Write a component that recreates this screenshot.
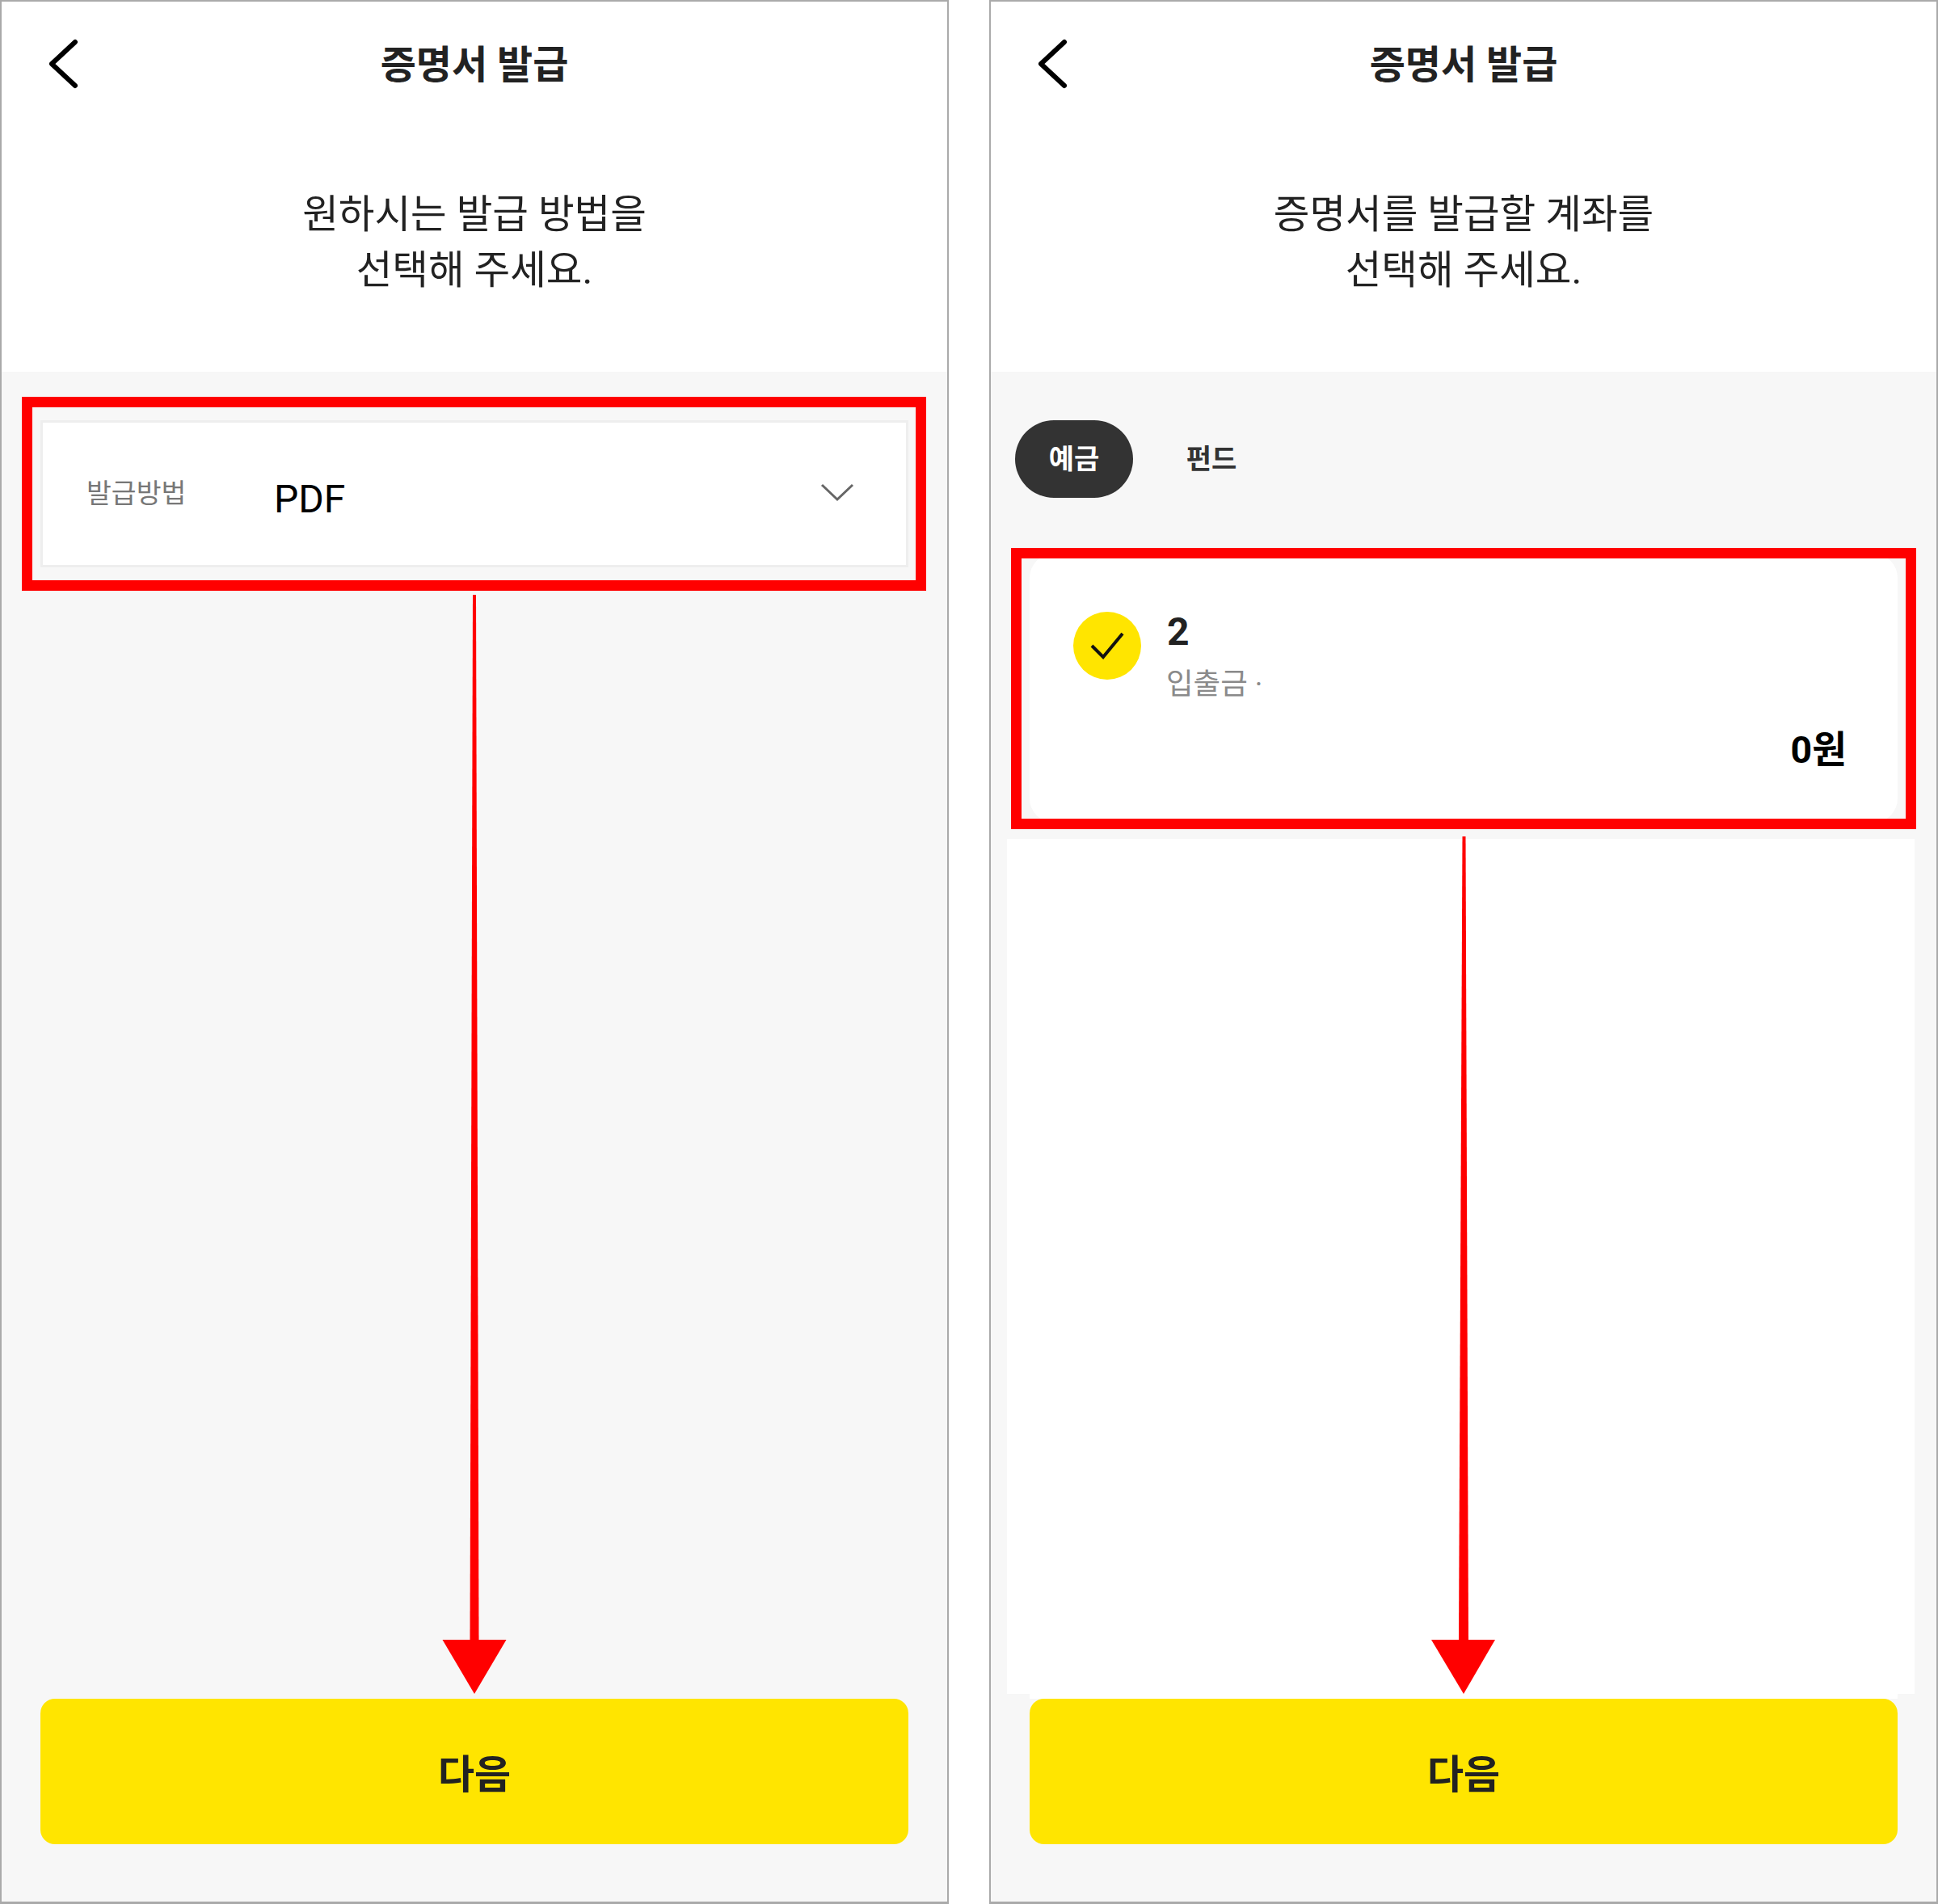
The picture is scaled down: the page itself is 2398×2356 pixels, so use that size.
<script>
  let tab = 0;
</script>

<main class="page">
  <section class="panel">
    <header class="head">
      <div class="topbar">
        <svg class="back" width="37" height="64" viewBox="0 0 37 64">
          <path d="M33 5 L4 32 L33 59" />
        </svg>
        <h1>증명서 발급</h1>
      </div>
      <p class="lead">원하시는 발급 방법을<br />선택해 주세요.</p>
    </header>
    <div class="body">
      <div class="select">
        <span class="select-label">발급방법</span>
        <span class="select-value">PDF</span>
        <svg class="chevron" width="42" height="24" viewBox="0 0 42 24">
          <path d="M2 3 L21 21 L40 3" />
        </svg>
      </div>
      <button class="next">다음</button>
    </div>
  </section>

  <section class="panel">
    <header class="head">
      <div class="topbar">
        <svg class="back" width="37" height="64" viewBox="0 0 37 64">
          <path d="M33 5 L4 32 L33 59" />
        </svg>
        <h1>증명서 발급</h1>
      </div>
      <p class="lead">증명서를 발급할 계좌를<br />선택해 주세요.</p>
    </header>
    <div class="body">
      <div class="tabs">
        <button class="tab" class:on={tab === 0} onclick={() => (tab = 0)}>예금</button>
        <button class="tab" class:on={tab === 1} onclick={() => (tab = 1)}>펀드</button>
      </div>
      <div class="account">
        <div class="account-top">
          <span class="tick">
            <svg width="44" height="36" viewBox="0 0 44 36">
              <path d="M3 18 L17 32 L41 3" />
            </svg>
          </span>
          <div class="account-info">
            <div class="account-no">2</div>
            <div class="account-type">입출금 ·</div>
          </div>
        </div>
        <div class="account-amount">0원</div>
      </div>
      <div class="blank"></div>
      <div class="strip"></div>
      <button class="next">다음</button>
    </div>
  </section>

  <!-- red annotations drawn over the screenshots -->
  <svg class="marks" width="2398" height="2356" viewBox="0 0 2398 2356">
    <rect x="33.5" y="497.5" width="1106" height="227" />
    <rect x="1257.5" y="684.5" width="1107" height="335" />
    <polygon points="585,736 589,736 592.5,2030 581.5,2030" />
    <polygon points="547.5,2029 626.5,2029 587,2096" />
    <polygon points="1809.5,1035 1813.5,1035 1817,2030 1805,2030" />
    <polygon points="1771,2029 1850,2029 1811,2096" />
  </svg>
</main>

<style>
  :global(body) {
    margin: 0;
    background: #fff;
  }

  * {
    box-sizing: border-box;
  }

  .page {
    position: relative;
    display: flex;
    gap: 50px;
    width: 2398px;
    height: 2356px;
    font-family: Roboto, "Noto Sans CJK KR", sans-serif;
    color: #222;
  }

  .panel {
    display: flex;
    flex-direction: column;
    width: 1174px;
    height: 2356px;
    border: 3px solid #aaa;
    border-width: 2px 2px 3px 2px;
  }

  .head {
    height: 458px;
    background: #fff;
    flex: none;
  }

  .topbar {
    display: grid;
    grid-template-columns: 1fr auto 1fr;
    align-items: center;
    height: 64px;
    margin-top: 45px;
    padding-left: 58px;
  }

  .back path {
    fill: none;
    stroke: #000;
    stroke-width: 6;
    stroke-linecap: round;
    stroke-linejoin: round;
  }

  h1 {
    margin: 0;
    font-size: 48px;
    font-weight: 700;
    line-height: 64px;
    letter-spacing: 0;
    transform: translate(-29px, 1.5px);
  }

  .lead {
    margin: 120px 0 0;
    text-align: center;
    font-size: 48.5px;
    font-weight: 400;
    line-height: 69px;
  }

  .body {
    flex: 1;
    display: flex;
    flex-direction: column;
    background: #f7f7f7;
    padding-top: 60px;
  }

  .select {
    display: flex;
    align-items: center;
    height: 182px;
    margin: 0 48px;
    padding: 0 64px 0 54px;
    background: #fff;
    border: 3px solid #eee;
  }

  .select-label {
    width: 232px;
    font-size: 33.5px;
    color: #777;
    margin-top: -8px;
  }

  .select-value {
    font-size: 48px;
    color: #000;
    margin-top: 12px;
  }

  .chevron {
    margin-left: auto;
    margin-top: -4px;
  }

  .chevron path {
    fill: none;
    stroke: #666;
    stroke-width: 3;
  }

  .next {
    display: block;
    height: 180px;
    margin: auto 48px 71px 48px;
    padding: 0 0 2px;
    border: 0;
    border-radius: 18px;
    background: #ffe500;
    font: 700 49px Roboto, "Noto Sans CJK KR", sans-serif;
    color: #222;
  }

  .tabs {
    display: flex;
    gap: 24px;
    margin-left: 30px;
  }

  .tab {
    width: 146px;
    height: 96px;
    padding: 0 0 6px;
    border: 0;
    border-radius: 48px;
    background: transparent;
    font: 700 34px Roboto, "Noto Sans CJK KR", sans-serif;
    color: #333;
  }

  .tab.on {
    background: #333;
    color: #fff;
  }

  .account {
    height: 333px;
    margin: 69px 48px 0;
    padding: 72px 63px 0 54px;
    background: #fff;
    border-radius: 30px;
  }

  .account-top {
    display: flex;
    gap: 32px;
  }

  .tick {
    display: flex;
    align-items: center;
    justify-content: center;
    width: 84px;
    height: 84px;
    border-radius: 50%;
    background: #ffe500;
  }

  .tick path {
    fill: none;
    stroke: #111;
    stroke-width: 4;
  }

  .account-no {
    font-size: 48px;
    font-weight: 700;
    line-height: 56px;
    margin-top: -3px;
    color: #222;
  }

  .account-type {
    font-size: 36.5px;
    line-height: 50px;
    color: #8a8a8a;
    margin-top: 12px;
    margin-left: -1px;
  }

  .account-amount {
    margin-top: 26px;
    text-align: right;
    font-size: 46.5px;
    font-weight: 700;
    line-height: 60px;
    color: #000;
  }

  .blank {
    flex: none;
    height: 1058px;
    margin: 20px 27px 0 20px;
    background: #fff;
  }

  .strip {
    flex: none;
    height: 6px;
    margin: 0 48px;
    background: #fff;
  }

  .blank ~ .next {
    margin-top: 0;
  }

  .marks {
    position: absolute;
    inset: 0;
    pointer-events: none;
  }

  .marks rect {
    fill: none;
    stroke: #f00;
    stroke-width: 13;
  }

  .marks polygon {
    fill: #f00;
  }
</style>
